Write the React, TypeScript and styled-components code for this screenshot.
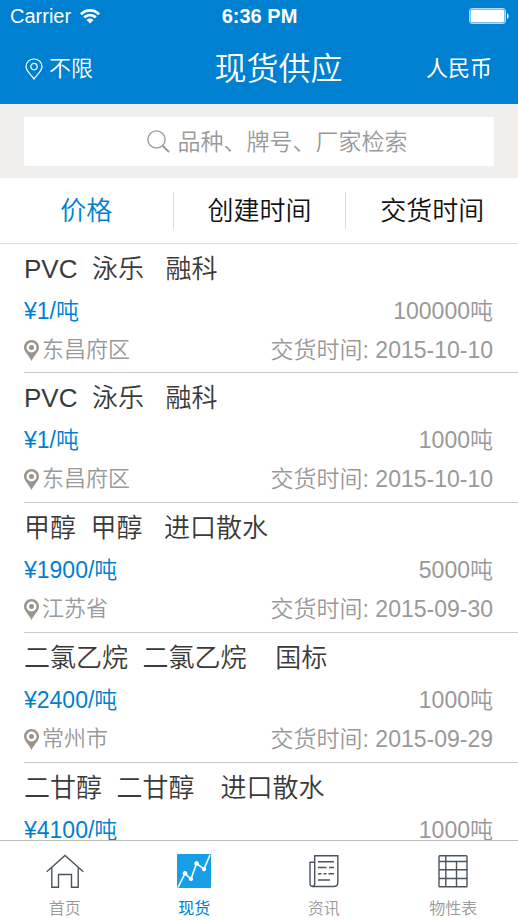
import React, { useState } from "react";
import styled, { createGlobalStyle } from "styled-components";

const BLUE = "#0080d0";
const GREY = "#999999";
const SANS = '"Liberation Sans", "Noto Sans CJK SC", sans-serif';

const GlobalStyle = createGlobalStyle`
  *, *::before, *::after { box-sizing: border-box; }
  body { margin: 0; background: #fff; font-family: ${SANS}; }
  button, input { font: inherit; color: inherit; border: 0; margin: 0; padding: 0; background: none; }
  button { cursor: pointer; }
  h1, h2, ul { margin: 0; padding: 0; font-weight: inherit; list-style: none; }
`;

const Screen = styled.div`
  display: flex;
  flex-direction: column;
  height: 100vh;
  overflow: hidden;
  font-weight: 350;
`;

const Header = styled.header`
  flex: none;
  background: ${BLUE};
  color: #fff;
`;

const StatusBar = styled.div`
  display: grid;
  grid-template-columns: 1fr auto 1fr;
  align-items: center;
  height: 32px;
  padding: 0 9px 0 10px;
  font-size: 20px;
`;

const Carrier = styled.span`
  display: flex;
  align-items: center;
  gap: 9px;
`;

const Clock = styled.span`
  font-weight: 700;
`;

const Battery = styled.svg`
  justify-self: end;
`;

const NavBar = styled.div`
  display: grid;
  grid-template-columns: 1fr auto 1fr;
  align-items: center;
  height: 72px;
  padding: 2px 26px 0 25px;
`;

const NavTitle = styled.h1`
  padding-left: 40px;
  font-size: 32px;
  line-height: 48px;
`;

const RegionButton = styled.button`
  display: flex;
  align-items: center;
  justify-self: start;
  gap: 6px;
  font-size: 22px;
  line-height: 32px;
`;

const CurrencyButton = styled.button`
  justify-self: end;
  font-size: 22px;
  line-height: 32px;
  font-weight: 400;
`;

const SearchArea = styled.div`
  flex: none;
  padding: 13px 24px 12px;
  background: #f0efed;
`;

const SearchBox = styled.label`
  display: flex;
  align-items: center;
  justify-content: center;
  gap: 8px;
  height: 49px;
  padding-left: 36px;
  background: #fff;
  color: ${GREY};
`;

const SearchInput = styled.input`
  width: 10em;
  height: 38px;
  padding-top: 2px;
  font-size: 23px;
  outline: none;
  &::placeholder { color: ${GREY}; opacity: 1; }
`;

const SortBar = styled.div`
  display: grid;
  grid-template-columns: repeat(3, 1fr);
  align-items: center;
  flex: none;
  height: 66px;
  border-bottom: 1px solid #dcdbd8;
`;

const SortButton = styled.button<{ $active: boolean }>`
  height: 37px;
  padding-top: 2px;
  font-size: 26px;
  line-height: 35px;
  color: ${(p) => (p.$active ? BLUE : "#111")};
  & + & { border-left: 1px solid #dcdbd8; }
`;

const OfferList = styled.ul`
  flex: 1;
  min-height: 0;
  overflow-y: auto;
  scrollbar-width: none;
`;

const Offer = styled.li`
  margin-left: 24px;
  padding: 7px 25px 7px 0;
  border-bottom: 1px solid #c8c8c8;
  &:first-child { padding-bottom: 6px; }
`;

const OfferTitle = styled.h2`
  font-size: 26px;
  line-height: 37px;
  color: #3a3a3a;
  white-space: pre;
`;

const OfferLine = styled.div`
  display: flex;
  justify-content: space-between;
  font-size: 23px;
  line-height: 32px;
  color: ${GREY};
`;

const PriceLine = styled(OfferLine)`
  margin-top: 7px;
  margin-bottom: 7px;
`;

const Price = styled.span`
  color: ${BLUE};
`;

const Place = styled.span`
  display: flex;
  align-items: center;
  gap: 3px;
  font-size: 22px;
`;

const TabBar = styled.nav`
  display: grid;
  grid-template-columns: repeat(4, 1fr);
  flex: none;
  height: 80px;
  border-top: 1px solid #bdbdbd;
  background: #fff;
`;

const TabButton = styled.button<{ $active: boolean }>`
  display: flex;
  flex-direction: column;
  align-items: center;
  gap: 9px;
  padding-top: 13px;
  font-size: 16px;
  line-height: 24px;
  font-weight: ${(p) => (p.$active ? 400 : 350)};
  color: ${(p) => (p.$active ? BLUE : GREY)};
`;

const WifiIcon = () => (
  <svg width="20" height="15" viewBox="0 0 20 15" fill="#fff" aria-hidden="true">
    <path d="M0 4.3C5.5-1.4 14.500-1.400 20 4.300L18.100 6.200C13.600 1.700 6.400 1.700 1.900 6.200Z" />
    <path d="M3.300 7.600C7.100 3.900 12.900 3.900 16.700 7.600L14.800 9.500C12 6.900 8 6.900 5.200 9.500Z" />
    <path d="M6.500 10.900C8.600 9.100 11.400 9.100 13.500 10.900L10 14.400Z" />
  </svg>
);

const BatteryIcon = () => (
  <Battery width="40" height="16" viewBox="0 0 40 16" aria-label="电量">
    <rect x="0.500" y="0.500" width="36" height="15" rx="2.500" fill="none" stroke="#b5dcf5" />
    <rect x="1.500" y="1.500" width="34" height="13" rx="1.500" fill="#fff" />
    <path d="M38 5.200C40.300 6 40.300 10 38 10.800Z" fill="#fff" />
  </Battery>
);

const PinOutline = () => (
  <svg width="18" height="22" viewBox="0 0 18 22" fill="none" stroke="#fff" strokeWidth="1.200" aria-hidden="true">
    <path d="M9 21C7.500 18.200 1 13.500 1 8.600C1 4.300 4.600 1 9 1S17 4.300 17 8.600C17 13.500 10.500 18.200 9 21Z" />
    <circle cx="9" cy="8.600" r="3.200" />
  </svg>
);

const PinSolid = () => (
  <svg width="15" height="21" viewBox="0 0 15 21" aria-hidden="true">
    <path
      fill="#9c948c"
      fillRule="evenodd"
      d="M7.500 0C11.700 0 15 3.300 15 7.500C15 12 9.500 16 7.500 21C5.500 16 0 12 0 7.500C0 3.300 3.300 0 7.500 0ZM7.500 2.500A5 5 0 1 0 7.500 12.500A5 5 0 1 0 7.500 2.500Z"
    />
    <circle cx="7.500" cy="7.500" r="2.500" fill="#9c948c" />
  </svg>
);

const SearchIcon = () => (
  <svg width="23" height="23" viewBox="0 0 23 23" fill="none" stroke={GREY} strokeWidth="1.400" aria-hidden="true">
    <circle cx="9.500" cy="9.500" r="8.600" />
    <path d="M15.700 15.700L22 22" strokeWidth="2" />
  </svg>
);

const HomeIcon = () => (
  <svg width="38" height="34" viewBox="0 1 38 34" fill="none" stroke="#4a5460" strokeWidth="1.400" aria-hidden="true">
    <path d="M0.700 18.700L19 2.500L37.300 18.700" />
    <path d="M5.800 14.500V34.300H12.500V21.500H25.500V34.300H32.200V14.500" />
  </svg>
);

const ChartIcon = () => (
  <svg width="34" height="34" viewBox="1 1 34 34" aria-hidden="true">
    <rect x="1" y="1" width="34" height="34" rx="1" fill="#169fe6" />
    <g fill="#fff" stroke="#fff">
      <path d="M2 34.500L9 20.500L15 26L20.500 10.500L28 16L34 2" fill="none" strokeWidth="1.600" />
      <circle cx="9" cy="20.300" r="1.900" />
      <circle cx="15" cy="26" r="1.700" />
      <circle cx="20.500" cy="10.500" r="1.900" />
      <circle cx="28" cy="16.200" r="1.700" />
    </g>
  </svg>
);

const NewsIcon = () => (
  <svg width="30" height="34" viewBox="0 1 30 34" fill="none" stroke="#4a5460" strokeWidth="1.400" aria-hidden="true">
    <path d="M5.700 30.500V2.700H28.800V29.500Q28.800 33.500 24.800 33.500H4Q1 33.500 1 30.500V9.300H5.700" />
    <path d="M5.700 30Q5.700 33.500 3.500 33.500" />
    <path d="M9 8.700H25M9 14.500H17.500M20 14.500H25M9 20.700H12.500M14.500 20.700H17.500M19.500 20.700H25M9 27H21" />
  </svg>
);

const TableIcon = () => (
  <svg width="30" height="34" viewBox="0 1 30 34" fill="none" stroke="#4a5460" strokeWidth="1.400" aria-hidden="true">
    <rect x="1" y="2.700" width="28" height="31" rx="0.800" />
    <path d="M1 8.500H29M1 16.800H29M1 25.500H29M7.800 2.700V33.700M18.500 8.500V33.700" />
  </svg>
);

const offers = [
  { title: "PVC  泳乐   融科", price: "¥1/吨", amount: "100000吨", place: "东昌府区", date: "2015-10-10" },
  { title: "PVC  泳乐   融科", price: "¥1/吨", amount: "1000吨", place: "东昌府区", date: "2015-10-10" },
  { title: "甲醇  甲醇   进口散水", price: "¥1900/吨", amount: "5000吨", place: "江苏省", date: "2015-09-30" },
  { title: "二氯乙烷  二氯乙烷    国标", price: "¥2400/吨", amount: "1000吨", place: "常州市", date: "2015-09-29" },
  { title: "二甘醇  二甘醇\u3000进口散水", price: "¥4100/吨", amount: "1000吨", place: "江苏省", date: "2015-09-29" },
];

const sorts = ["价格", "创建时间", "交货时间"];

const tabs = [
  { label: "首页", Icon: HomeIcon },
  { label: "现货", Icon: ChartIcon },
  { label: "资讯", Icon: NewsIcon },
  { label: "物性表", Icon: TableIcon },
];

export default function App() {
  const [sort, setSort] = useState("价格");
  const [tab, setTab] = useState("现货");

  return (
    <Screen>
      <GlobalStyle />
      <Header>
        <StatusBar>
          <Carrier>
            Carrier
            <WifiIcon />
          </Carrier>
          <Clock>6:36 PM</Clock>
          <BatteryIcon />
        </StatusBar>
        <NavBar>
          <RegionButton type="button">
            <PinOutline />
            不限
          </RegionButton>
          <NavTitle>现货供应</NavTitle>
          <CurrencyButton type="button">人民币</CurrencyButton>
        </NavBar>
      </Header>

      <SearchArea>
        <SearchBox>
          <SearchIcon />
          <SearchInput type="text" aria-label="检索" placeholder="品种、牌号、厂家检索" />
        </SearchBox>
      </SearchArea>

      <SortBar>
        {sorts.map((name) => (
          <SortButton key={name} type="button" $active={name === sort} aria-pressed={name === sort} onClick={() => setSort(name)}>
            {name}
          </SortButton>
        ))}
      </SortBar>

      <OfferList>
        {offers.map((o, i) => (
          <Offer key={i}>
            <OfferTitle>{o.title}</OfferTitle>
            <PriceLine>
              <Price>{o.price}</Price>
              <span>{o.amount}</span>
            </PriceLine>
            <OfferLine>
              <Place>
                <PinSolid />
                {o.place}
              </Place>
              <span>交货时间: {o.date}</span>
            </OfferLine>
          </Offer>
        ))}
      </OfferList>

      <TabBar>
        {tabs.map(({ label, Icon }) => (
          <TabButton
            key={label}
            type="button"
            $active={label === tab}
            aria-current={label === tab ? "page" : undefined}
            onClick={() => setTab(label)}
          >
            <Icon />
            {label}
          </TabButton>
        ))}
      </TabBar>
    </Screen>
  );
}
